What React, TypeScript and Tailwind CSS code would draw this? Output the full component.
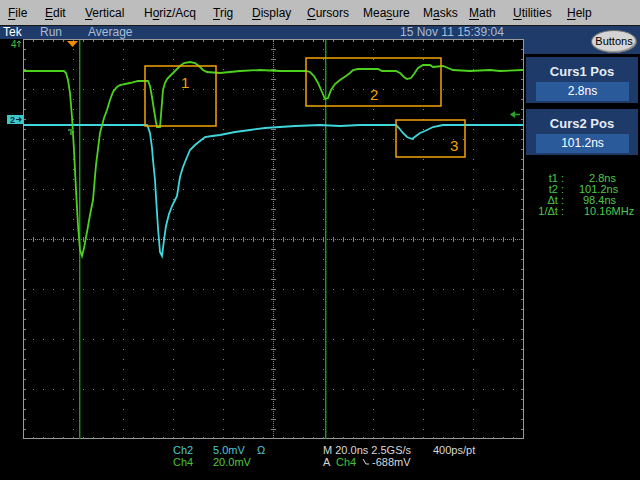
import { Fragment } from 'react'

type MenuItem = { label: string; key: number; width: string }

const menuItems: MenuItem[] = [
    { label: 'File', key: 0, width: 'w-[37px]' },
    { label: 'Edit', key: 0, width: 'w-[40px]' },
    { label: 'Vertical', key: 0, width: 'w-[59px]' },
    { label: 'Horiz/Acq', key: 1, width: 'w-[69px]' },
    { label: 'Trig', key: 0, width: 'w-[39px]' },
    { label: 'Display', key: 0, width: 'w-[55px]' },
    { label: 'Cursors', key: 0, width: 'w-[56px]' },
    { label: 'Measure', key: 3, width: 'w-[60px]' },
    { label: 'Masks', key: 1, width: 'w-[46px]' },
    { label: 'Math', key: 0, width: 'w-[44px]' },
    { label: 'Utilities', key: 0, width: 'w-[54px]' },
    { label: 'Help', key: 0, width: 'w-[40px]' },
]

const greenTrace: number[][] = [
    [23, 71], [64, 71], [66, 73], [68, 80], [70, 93], [72, 117], [74, 150], [76, 190], [78, 225],
    [80, 250], [82, 256], [84, 248], [87, 232], [90, 215], [93, 200], [96, 165], [100, 133],
    [104, 118], [107, 110], [110, 100], [113, 92], [117, 87], [120, 85], [130, 83], [138, 81],
    [148, 81], [150, 86], [152, 97], [154, 110], [156, 122], [157, 127], [160, 127], [161, 115],
    [163, 90], [165, 83], [167, 79], [170, 76], [173, 73], [177, 69], [180, 66], [184, 63],
    [190, 62], [195, 63], [199, 66], [203, 70], [207, 72], [220, 73], [240, 71], [260, 70],
    [280, 71], [306, 71], [310, 72], [314, 76], [318, 83], [322, 92], [325, 99], [328, 98],
    [331, 90], [335, 84], [340, 80], [346, 76], [350, 73], [353, 70], [358, 69], [378, 69],
    [382, 71], [396, 71], [400, 73], [404, 77], [407, 79], [411, 78], [414, 74], [418, 68],
    [423, 65], [430, 65], [433, 67], [443, 66], [448, 68], [453, 70], [470, 71], [490, 70],
    [500, 71], [523, 70],
]

const cyanTrace: number[][] = [
    [23, 125], [147, 125], [148, 127], [150, 133], [152, 148], [153, 160], [155, 180], [156, 197],
    [158, 228], [160, 252], [162, 256], [164, 240], [166, 226], [169, 214], [172, 206], [175, 200],
    [177, 196], [180, 177], [183, 167], [187, 157], [190, 150], [195, 145], [200, 141], [205, 137],
    [212, 136], [220, 135], [235, 132], [250, 130], [265, 128], [280, 127], [295, 126], [320, 125],
    [340, 126], [360, 125], [396, 125], [399, 128], [403, 133], [407, 137], [412, 139], [416, 136],
    [420, 133], [425, 131], [433, 127], [443, 125], [523, 125],
]

const toPoints = (pts: number[][]) => pts.map((p) => p.join(',')).join(' ')

// all graticule dots and ticks as one path of 1px squares
const gridPath = (() => {
    let d = ''
    const dot = (x: number, y: number, w = 1, h = 1) => {
        d += `M${x} ${y}h${w}v${h}h-${w}z`
    }
    for (let i = 1; i < 10; i++) {
        const x = 23 + i * 50
        if (x === 273) continue
        for (let y = 49; y < 439; y += 10) dot(x, y)
    }
    for (let j = 1; j < 8; j++) {
        const y = 39 + j * 50
        if (y === 239) continue
        for (let x = 33; x < 523; x += 10) dot(x, y)
    }
    for (let x = 33; x < 523; x += 10) {
        dot(x, 40, 1, 2)
        dot(x, 437, 1, 2)
    }
    for (let y = 49; y < 439; y += 10) {
        dot(24, y, 2, 1)
        dot(521, y, 2, 1)
    }
    // center cross
    for (let y = 41; y < 439; y += 2) dot(273, y)
    for (let x = 25; x < 523; x += 2) dot(x, 239)
    for (let y = 49; y < 439; y += 10) dot(271, y, 5, 1)
    for (let x = 33; x < 523; x += 10) dot(x, 237, 1, 5)
    return d
})()

const Scope = () => {
    return (
        <svg width={524} height={401} viewBox="0 39 524 401" className="block">
            <rect x={23.5} y={39.5} width={500} height={399} fill="none" stroke="#9a9a9a" />
            <path d={gridPath} fill="#858585" />

            {/* cursors */}
            <rect x={79} y={40} width={1.4} height={399} fill="#1f9a1f" />
            <rect x={325} y={40} width={1.4} height={399} fill="#1f9a1f" />

            <polyline points={toPoints(cyanTrace)} fill="none" stroke="#3fd6dc" strokeWidth={1.8} />
            <polyline points={toPoints(greenTrace)} fill="none" stroke="#4cd21c" strokeWidth={1.8} />

            {/* annotations */}
            <g fill="none" stroke="#f2a400" strokeWidth={1.5}>
                <rect x={145} y={66} width={71} height={60} />
                <rect x={306} y={58} width={135} height={48} />
                <rect x={396} y={120} width={69} height={37} />
            </g>
            <g fill="#f2a400" fontFamily="'Liberation Sans', sans-serif" fontSize={15}>
                <text x={181} y={88}>1</text>
                <text x={370} y={100}>2</text>
                <text x={450} y={151}>3</text>
            </g>

            {/* markers */}
            <polygon points="67,41 78,41 72.5,47" fill="#f08c00" />
            <text x={11} y={48} fill="#3cc03c" fontFamily="'Liberation Sans', sans-serif" fontSize={10}>
                4
            </text>
            <path d="M19 47v-6M17 43l2-2 2 2" stroke="#3cc03c" strokeWidth={1} fill="none" />
            <rect x={7} y={115} width={16} height={9} fill="#3cc8c8" />
            <text x={10} y={123} fill="#0c2a3a" fontFamily="'Liberation Sans', sans-serif" fontSize={9} fontWeight="bold">
                2
            </text>
            <path d="M16 119.5h5M19 117.5l2 2-2 2" stroke="#0c2a3a" strokeWidth={1.2} fill="none" />
            <rect x={68} y={129} width={6} height={2} fill="#2a8a2a" />
            <rect x={70} y={129} width={2} height={6} fill="#2a8a2a" />
            <path d="M511 114.5h9" stroke="#2aa02a" strokeWidth={1.5} />
            <polygon points="510,114.5 515,111 515,118" fill="#2aa02a" />
        </svg>
    )
}

const SlopeIcon = () => (
    <svg width={8} height={8} viewBox="0 0 8 8" className="inline-block">
        <path d="M1 1 L4 6 L7 6" stroke="#d8d8d8" strokeWidth={1} fill="none" />
    </svg>
)

const Readout = () => {
    return (
        <div className="flex flex-col pt-[4px] pl-[173px] text-[11px] leading-[12px]">
            <div className="flex">
                <span className="w-[40px] text-[#4cc8d6]">Ch2</span>
                <span className="w-[44px] text-[#4cc8d6]">5.0mV</span>
                <span className="w-[66px] text-[#4cc8d6]">Ω</span>
                <span className="w-[110px] text-[#d8d8d8]">M 20.0ns 2.5GS/s</span>
                <span className="text-[#d8d8d8]">400ps/pt</span>
            </div>
            <div className="flex">
                <span className="w-[40px] text-[#44c034]">Ch4</span>
                <span className="w-[110px] text-[#50c840]">20.0mV</span>
                <span className="w-[13px] text-[#d8d8d8]">A</span>
                <span className="w-[26px] text-[#44c034]">Ch4</span>
                <span className="flex w-[10px] items-center">
                    <SlopeIcon />
                </span>
                <span className="text-[#d8d8d8]">-688mV</span>
            </div>
        </div>
    )
}

const CursorBox = ({ title, value }: { title: string; value: string }) => {
    return (
        <div className="ml-[2px] mr-[2px] flex h-[46px] flex-col bg-[#1d3a68]">
            <div className="pt-[7px] text-center text-[13px] font-bold leading-[16px] text-[#e6ecf4]">
                {title}
            </div>
            <div className="mt-[2px] ml-[10px] mr-[9px] h-[19px] bg-[#2b5a9a] text-center text-[12px] leading-[19px] text-white">
                {value}
            </div>
        </div>
    )
}

const readings = [
    { label: 't1 :', value: '2.8ns', pad: 'pl-[25px]' },
    { label: 't2 :', value: '101.2ns', pad: 'pl-[15px]' },
    { label: 'Δt :', value: '98.4ns', pad: 'pl-[19px]' },
    { label: '1/Δt :', value: '10.16MHz', pad: 'pl-[20px]' },
]

const App = () => {
    return (
        <div className="flex h-[480px] w-[640px] flex-col overflow-hidden bg-black font-['Liberation_Sans',sans-serif]">
            <div className="flex h-[26px] items-center border-b border-[#161616] bg-[#bdbdbd] pl-[8px] text-[12px] text-black">
                {menuItems.map((m) => (
                    <span key={m.label} className={`${m.width} shrink-0`}>
                        {m.label.slice(0, m.key)}
                        <span className="underline underline-offset-2">{m.label[m.key]}</span>
                        {m.label.slice(m.key + 1)}
                    </span>
                ))}
            </div>
            <div className="flex flex-1">
                <div className="flex w-[524px] flex-col">
                    <div className="flex h-[13px] items-center bg-[#1f3b69] text-[12px] leading-[13px] text-[#a9bcd8]">
                        <span className="w-[37px] pl-[3px] text-white">Tek</span>
                        <span className="w-[51px] pl-[3px]">Run</span>
                        <span className="w-[312px]">Average</span>
                        <span>15 Nov 11 15:39:04</span>
                    </div>
                    <Scope />
                    <Readout />
                </div>
                <div className="flex w-[116px] flex-col">
                    <div className="flex h-[28px] items-start justify-end bg-[#1f3b69] pt-[4px] pr-[3px]">
                        <div className="flex h-[23px] w-[46px] items-center justify-center rounded-[50%] border border-[#6a6a6a] bg-[#d4d4d4] text-[11px] text-black shadow-[inset_-1px_-1px_0_#9a9a9a]">
                            Buttons
                        </div>
                    </div>
                    <div className="h-[3px]" />
                    <CursorBox title="Curs1 Pos" value="2.8ns" />
                    <div className="h-[6px]" />
                    <CursorBox title="Curs2 Pos" value="101.2ns" />
                    <div className="mt-[18px] flex flex-col text-[11px] leading-[11px] text-[#4cc84c]">
                        {readings.map((r) => (
                            <Fragment key={r.label}>
                                <div className="flex">
                                    <span className="w-[40px] text-right">{r.label}</span>
                                    <span className={r.pad}>{r.value}</span>
                                </div>
                            </Fragment>
                        ))}
                    </div>
                </div>
            </div>
        </div>
    )
}

export default App
